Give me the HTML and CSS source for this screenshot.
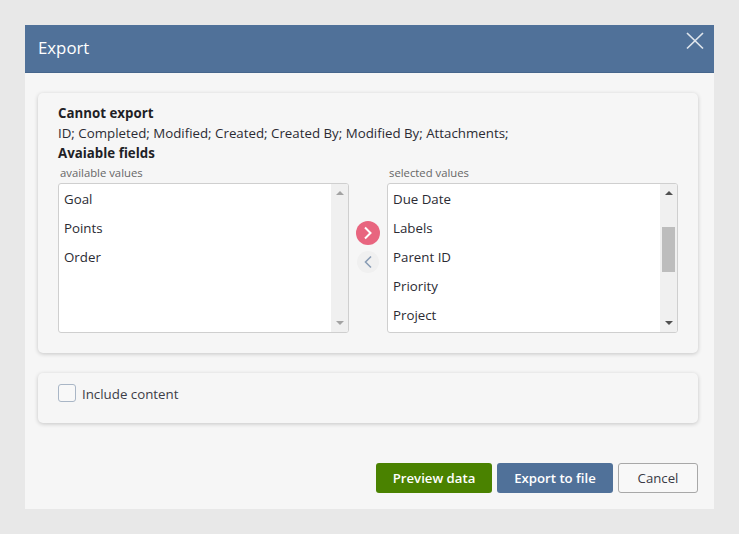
FILE: index.html
```html
<!DOCTYPE html>
<html lang="en">

<head>
  <meta charset="UTF-8">
  <title>Export</title>
  <link rel="stylesheet" href="styles.css">
</head>

<body>
  <div class="dialog">
    <div class="dialog-header">
      <span class="dialog-title">Export</span>
      <svg class="close-icon" width="18" height="18" viewBox="0 0 18 18">
        <path d="M1 1L17 16.5M17 1L1 16.5" stroke="#dfe5ec" stroke-width="1.7" fill="none"/>
      </svg>
    </div>

    <div class="dialog-body">
      <div class="card fields-card">
        <div class="line bold">Cannot export</div>
        <div class="line">ID; Completed; Modified; Created; Created By; Modified By; Attachments;</div>
        <div class="line bold">Avaiable fields</div>

        <div class="picker">
          <div class="picker-col">
            <div class="list-label">available values</div>
            <div class="listbox">
              <div class="list-items">
                <div class="list-item">Goal</div>
                <div class="list-item">Points</div>
                <div class="list-item">Order</div>
              </div>
              <div class="scrollbar">
                <span class="arrow-up disabled"></span>
                <span class="arrow-down disabled"></span>
              </div>
            </div>
          </div>

          <div class="move-buttons">
            <div class="move-btn add">
              <svg width="10" height="14" viewBox="0 0 10 14">
                <path d="M2 1.5L7.5 7L2 12.5" stroke="#fff" stroke-width="2" fill="none"/>
              </svg>
            </div>
            <div class="move-btn remove">
              <svg width="10" height="14" viewBox="0 0 10 14">
                <path d="M8 1.5L2.5 7L8 12.5" stroke="#8a9db5" stroke-width="1.6" fill="none"/>
              </svg>
            </div>
          </div>

          <div class="picker-col">
            <div class="list-label">selected values</div>
            <div class="listbox">
              <div class="list-items">
                <div class="list-item">Due Date</div>
                <div class="list-item">Labels</div>
                <div class="list-item">Parent ID</div>
                <div class="list-item">Priority</div>
                <div class="list-item">Project</div>
              </div>
              <div class="scrollbar">
                <span class="arrow-up"></span>
                <span class="scroll-thumb"></span>
                <span class="arrow-down"></span>
              </div>
            </div>
          </div>
        </div>
      </div>

      <div class="card content-card">
        <label class="check-row">
          <span class="checkbox"></span>
          <span class="check-text">Include content</span>
        </label>
      </div>

      <div class="actions">
        <button class="btn btn-green">Preview data</button>
        <button class="btn btn-blue">Export to file</button>
        <button class="btn btn-cancel">Cancel</button>
      </div>
    </div>
  </div>
</body>

</html>
```

FILE: styles.css
```css
body {
  margin: 0;
  height: 534px;
  overflow: hidden;
  background-color: #e8e8e8;
  font-family: "Open Sans", "Noto Sans", sans-serif;
  font-size: 13.3px;
  color: #2b2b33;
}

.dialog {
  width: 689px;
  height: 484px;
  margin: 25px 0 0 25px;
  background-color: #f6f6f6;
  display: flex;
  flex-direction: column;
}

.dialog-header {
  height: 48px;
  flex-shrink: 0;
  box-sizing: border-box;
  background-color: #507199;
  border-bottom: 1px solid #46668c;
  padding: 0 10px 0 13px;
  display: flex;
  justify-content: space-between;
  color: #fff;
}

.dialog-title {
  font-size: 16.8px;
  line-height: 45px;
}

.close-icon {
  margin-top: 7px;
}

.dialog-body {
  flex: 1;
  padding: 20px 16px 16px 13px;
  display: flex;
  flex-direction: column;
}

.card {
  background-color: #f6f6f6;
  border-radius: 5px;
  box-shadow: 0 1px 4px rgba(0, 0, 0, 0.2);
  padding: 10px 20px;
}

.fields-card {
  height: 260px;
  box-sizing: border-box;
}

.content-card {
  height: 50px;
  box-sizing: border-box;
  margin-top: 20px;
}

.line {
  line-height: 20px;
  height: 20px;
  white-space: nowrap;
}

.bold {
  font-weight: 700;
  color: #1f1f26;
}

.picker {
  display: flex;
  justify-content: space-between;
}

.picker-col {
  width: 291px;
}

.list-label {
  font-size: 11.3px;
  line-height: 20px;
  height: 20px;
  padding-left: 2px;
  color: #666;
}

.listbox {
  height: 150px;
  box-sizing: border-box;
  display: flex;
  background-color: #fff;
  border: 1px solid #cfcfcf;
  border-radius: 3px;
  overflow: hidden;
}

.list-items {
  flex: 1;
  padding-top: 1px;
}

.list-item {
  height: 29px;
  line-height: 29px;
  padding-left: 5px;
}

.scrollbar {
  width: 17px;
  background-color: #f0f0f0;
  display: flex;
  flex-direction: column;
  align-items: center;
  padding: 7px 0;
  box-sizing: border-box;
  justify-content: space-between;
}

.arrow-up,
.arrow-down {
  width: 0;
  height: 0;
  border-left: 4px solid transparent;
  border-right: 4px solid transparent;
}

.arrow-up {
  border-bottom: 4px solid #505050;
}

.arrow-down {
  border-top: 4px solid #505050;
}

.arrow-up.disabled {
  border-bottom-color: #a3a3a3;
}

.arrow-down.disabled {
  border-top-color: #a3a3a3;
}

.scroll-thumb {
  width: 13px;
  height: 45px;
  background-color: #bdbdbd;
  margin-bottom: 17px;
}

.move-buttons {
  display: flex;
  flex-direction: column;
  align-items: center;
  gap: 6px;
  padding-top: 58px;
}

.move-btn {
  border-radius: 50%;
  display: flex;
  align-items: center;
  justify-content: center;
}

.move-btn.add {
  width: 24px;
  height: 24px;
  background-color: #e8657f;
}

.move-btn.remove {
  width: 22px;
  height: 22px;
  background-color: #f0f0f0;
}

.check-row {
  display: flex;
  align-items: center;
  gap: 6px;
  color: #3d3d47;
}

.check-text {
  padding-top: 2px;
}

.checkbox {
  width: 16px;
  height: 16px;
  border: 1px solid #a9b6c6;
  border-radius: 3px;
  background-color: #f8f8f8;
}

.actions {
  margin-top: 40px;
  display: flex;
  justify-content: flex-end;
  gap: 5px;
}

.btn {
  height: 30px;
  box-sizing: border-box;
  border-radius: 3px;
  border: none;
  padding: 0;
  font-family: inherit;
  font-size: 13.2px;
  font-weight: 600;
}

.btn-green {
  width: 116px;
  background-color: #4a8200;
  color: #fff;
}

.btn-blue {
  width: 116px;
  background-color: #507199;
  color: #fff;
}

.btn-cancel {
  width: 80px;
  background-color: #f8f8f8;
  border: 1px solid #a8a8a8;
  color: #3a3a44;
  font-weight: 500;
}
```
